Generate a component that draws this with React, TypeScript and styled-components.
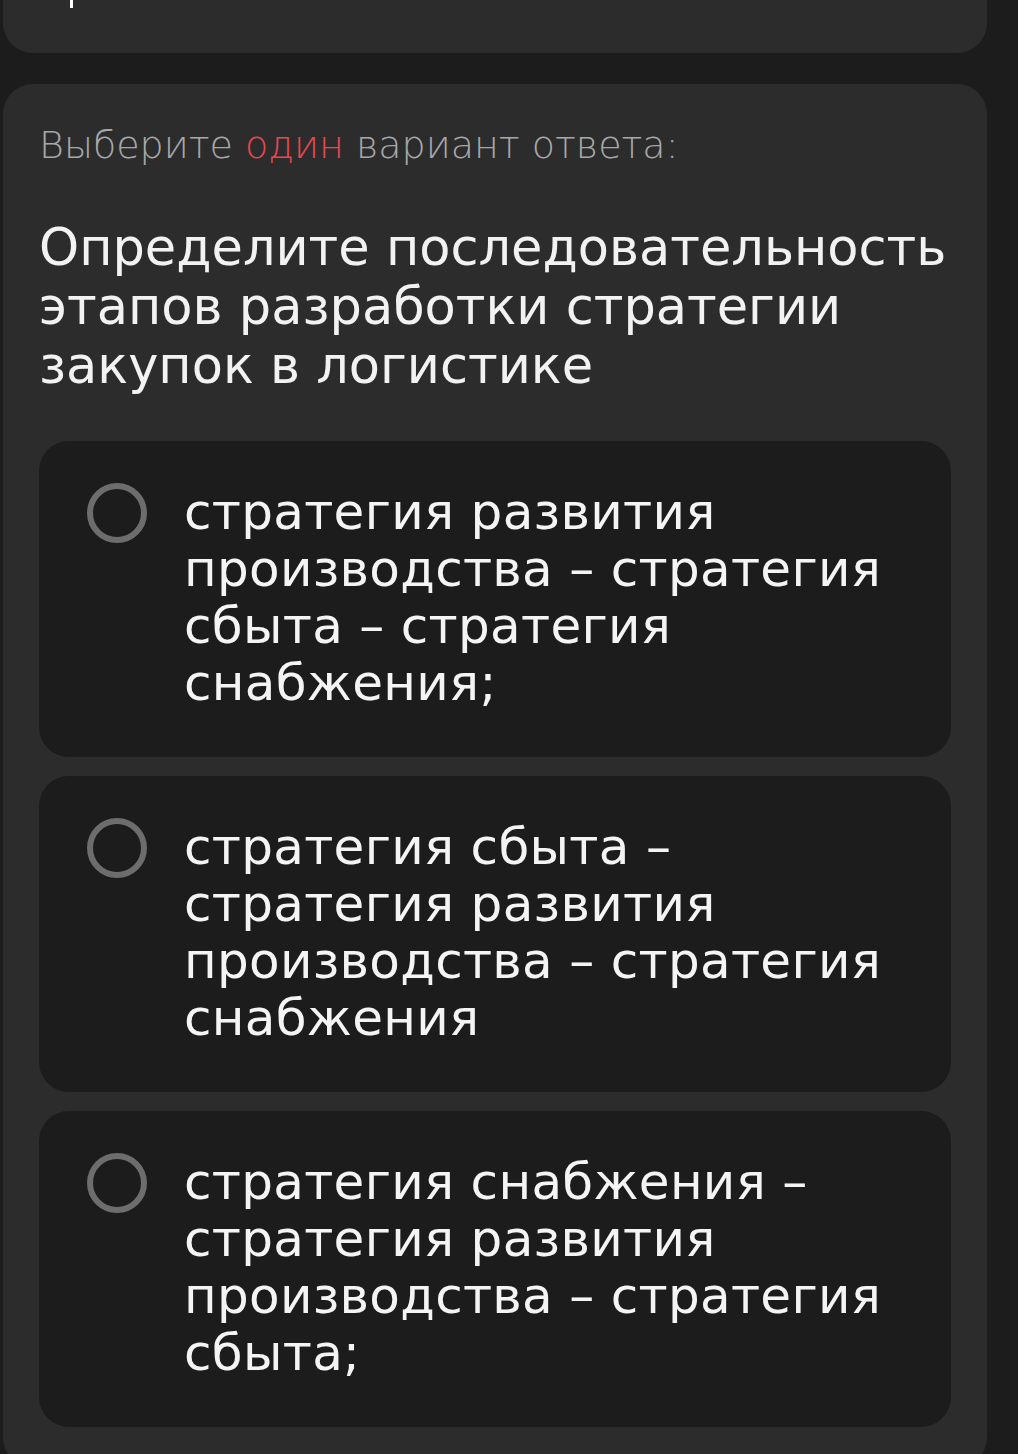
import * as React from 'react';
import styled, { createGlobalStyle } from 'styled-components';

const GlobalStyle = createGlobalStyle`
  html, body {
    margin: 0;
    padding: 0;
    background: #1c1c1c;
  }
  body {
    font-family: 'DejaVu Sans', 'Noto Sans', sans-serif;
    -webkit-font-smoothing: antialiased;
  }
`;

const Page = styled.div`
  width: 1018px;
  height: 1454px;
  overflow: hidden;
  display: flex;
  flex-direction: column;
  gap: 31px;
  padding: 0 31px 0 3px;
  box-sizing: border-box;
`;

const PrevCard = styled.div`
  height: 53px;
  flex-shrink: 0;
  background: #2c2c2c;
  border-radius: 0 0 30px 30px;
  padding-left: 67px;
`;

const Caret = styled.div`
  width: 3px;
  height: 8px;
  background: #ffffff;
`;

const Card = styled.div`
  flex-shrink: 0;
  background: #2c2c2c;
  border-radius: 30px;
  padding: 36px 36px 40px;
`;

const Hint = styled.div`
  font-weight: 200;
  font-size: 38px;
  color: #a8a8a8;
  line-height: 50px;

  em {
    font-style: normal;
    color: #e8474f;
  }
`;

const Question = styled.h2`
  margin: 48px 0 46px;
  font-weight: 400;
  font-size: 51px;
  line-height: 59px;
  color: #f2f2f2;
  max-width: 914px;
`;

const Options = styled.div`
  display: flex;
  flex-direction: column;
  gap: 19px;
`;

const Option = styled.label`
  display: flex;
  align-items: flex-start;
  gap: 37px;
  min-height: 316px;
  box-sizing: border-box;
  padding: 42px 40px 40px 48px;
  background: #1c1c1c;
  border-radius: 30px;
  cursor: pointer;
`;

const Radio = styled.span<{ checked?: boolean }>`
  flex-shrink: 0;
  width: 60px;
  height: 60px;
  box-sizing: border-box;
  border: 6px solid ${p => (p.checked ? '#e8474f' : '#6d6d6d')};
  border-radius: 50%;
`;

const OptionText = styled.span`
  max-width: 730px;
  font-size: 50px;
  line-height: 57px;
  letter-spacing: 0.3px;
  color: #f4f4f4;
  margin-top: 1px;
`;

const answers = [
  'стратегия развития производства – стратегия сбыта – стратегия снабжения;',
  'стратегия сбыта – стратегия развития производства – стратегия снабжения',
  'стратегия снабжения – стратегия развития производства – стратегия сбыта;'
];

export default function App() {
  const [selected, setSelected] = React.useState<number | null>(null);

  return (
    <>
      <GlobalStyle />
      <Page>
        <PrevCard>
          <Caret />
        </PrevCard>
        <Card>
          <Hint>
            Выберите <em>один</em> вариант ответа:
          </Hint>
          <Question>
            Определите последовательность этапов разработки стратегии закупок в логистике
          </Question>
          <Options>
            {answers.map((text, index) => (
              <Option key={index} onClick={() => setSelected(index)}>
                <Radio checked={selected === index} />
                <OptionText>{text}</OptionText>
              </Option>
            ))}
          </Options>
        </Card>
      </Page>
    </>
  );
}
